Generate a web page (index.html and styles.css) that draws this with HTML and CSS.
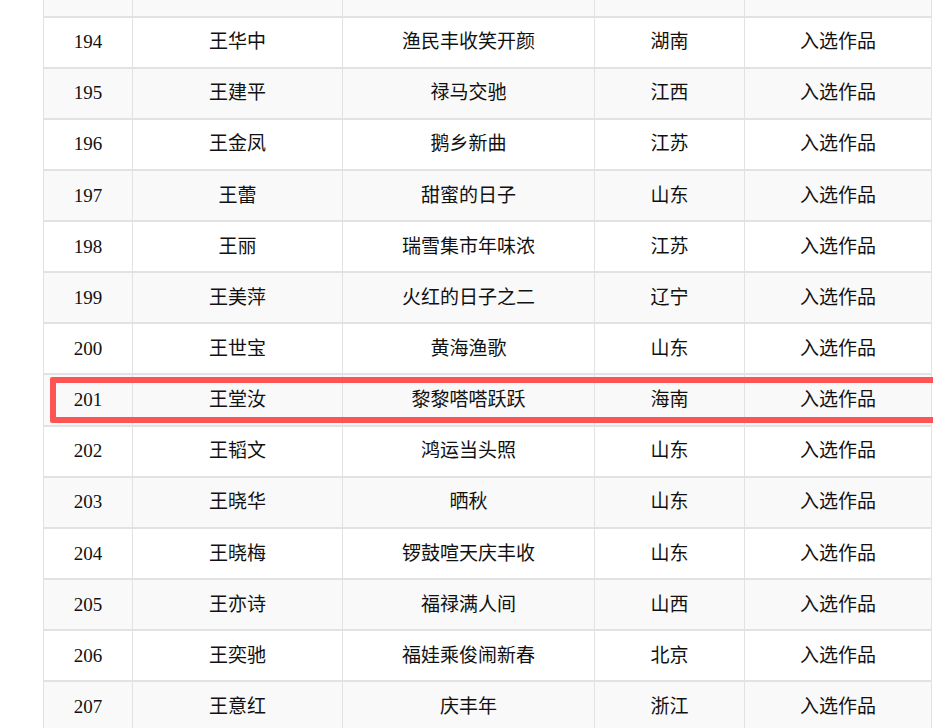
FILE: index.html
```html
<!DOCTYPE html>
<html lang="zh-CN">
<head>
<meta charset="utf-8">
<title>入选作品名单</title>
<link rel="stylesheet" href="styles.css">
</head>
<body>
<div class="page">
  <table class="list">
    <colgroup>
      <col class="c-no"><col class="c-name"><col class="c-work"><col class="c-prov"><col class="c-res">
    </colgroup>
    <tbody>
      <tr class="alt"><td></td><td></td><td></td><td></td><td></td></tr>
      <tr><td>194</td><td>王华中</td><td>渔民丰收笑开颜</td><td>湖南</td><td>入选作品</td></tr>
      <tr class="alt"><td>195</td><td>王建平</td><td>禄马交驰</td><td>江西</td><td>入选作品</td></tr>
      <tr><td>196</td><td>王金凤</td><td>鹅乡新曲</td><td>江苏</td><td>入选作品</td></tr>
      <tr class="alt"><td>197</td><td>王蕾</td><td>甜蜜的日子</td><td>山东</td><td>入选作品</td></tr>
      <tr><td>198</td><td>王丽</td><td>瑞雪集市年味浓</td><td>江苏</td><td>入选作品</td></tr>
      <tr class="alt"><td>199</td><td>王美萍</td><td>火红的日子之二</td><td>辽宁</td><td>入选作品</td></tr>
      <tr><td>200</td><td>王世宝</td><td>黄海渔歌</td><td>山东</td><td>入选作品</td></tr>
      <tr class="alt"><td>201</td><td>王堂汝</td><td>黎黎嗒嗒跃跃</td><td>海南</td><td>入选作品</td></tr>
      <tr><td>202</td><td>王韬文</td><td>鸿运当头照</td><td>山东</td><td>入选作品</td></tr>
      <tr class="alt"><td>203</td><td>王晓华</td><td>晒秋</td><td>山东</td><td>入选作品</td></tr>
      <tr><td>204</td><td>王晓梅</td><td>锣鼓喧天庆丰收</td><td>山东</td><td>入选作品</td></tr>
      <tr class="alt"><td>205</td><td>王亦诗</td><td>福禄满人间</td><td>山西</td><td>入选作品</td></tr>
      <tr><td>206</td><td>王奕驰</td><td>福娃乘俊闹新春</td><td>北京</td><td>入选作品</td></tr>
      <tr class="alt"><td>207</td><td>王意红</td><td>庆丰年</td><td>浙江</td><td>入选作品</td></tr>
    </tbody>
  </table>
  <div class="highlight"></div>
</div>
</body>
</html>
```
FILE: styles.css
```css
html, body {
  margin: 0;
  padding: 0;
  background: #ffffff;
  overflow: hidden;
}

.page {
  position: relative;
  margin-top: -35.15px;
  padding-left: 43px;
}

.list {
  width: 888px;
  border-collapse: collapse;
  table-layout: fixed;
  font-family: "Liberation Serif", "Noto Sans CJK SC", serif;
  font-size: 19px;
  color: #111111;
}

.c-no { width: 89px; }
.c-name { width: 210px; }
.c-work { width: 252px; }
.c-prov { width: 150px; }
.c-res { width: 187px; }

.list td {
  height: 51.15px;
  padding: 1px 0 0;
  box-sizing: border-box;
  border: 1px solid #e2e2e2;
  border-bottom-width: 2px;
  text-align: center;
  vertical-align: middle;
  line-height: 1.2;
}

.list tr.alt td {
  background: #f9f9f9;
}

.highlight {
  position: absolute;
  left: 50px;
  top: 412.15px;
  width: 900px;
  height: 46px;
  box-sizing: border-box;
  border: 6.5px solid #fe5454;
  border-radius: 2px;
  pointer-events: none;
}
```
